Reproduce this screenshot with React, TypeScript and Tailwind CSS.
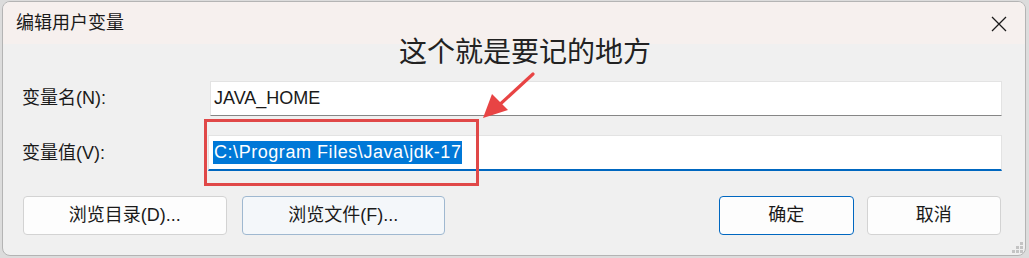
import React from 'react';

const FONT = { fontFamily: '"Liberation Sans", "Noto Sans CJK SC", sans-serif' };

function DialogButton({ label, variant = 'default' }: { label: string; variant?: 'default' | 'hover' | 'primary' }) {
  const look =
    variant === 'primary'
      ? 'border-[#0067c0] bg-[#fdfdfd]'
      : variant === 'hover'
        ? 'border-[#9fb8d0] bg-[#f4f7fa]'
        : 'border-[#d3d3d3] bg-[#fdfdfd]';
  return (
    <div className={`flex h-[39px] items-center justify-center rounded-[4px] border text-[18px] text-[#1a1a1a] ${look}`}>
      {label}
    </div>
  );
}

export default function App() {
  return (
    <div className="relative h-[258px] w-[1029px] overflow-hidden bg-[#dcdcdc] pb-[2px] pl-[2px] pr-[3px] pt-[1px]" style={FONT}>
      {/* dialog window */}
      <div className="flex h-full flex-col overflow-hidden rounded-[8px] border border-[#b4b4b4] bg-[#f0f0f0]">
        {/* title bar */}
        <div className="flex h-[42px] shrink-0 items-start justify-between bg-[#f6f0ee] pl-[13px] pr-[18px] pt-[10px]">
          <span className="text-[18px] leading-[22px] text-[#1a1a1a]">编辑用户变量</span>
          <svg width="16" height="16" viewBox="0 0 16 16" className="mt-[4px]">
            <path d="M1 1 L15 15 M15 1 L1 15" stroke="#1a1a1a" strokeWidth="1.3" fill="none" />
          </svg>
        </div>

        {/* fields */}
        <div className="flex flex-col gap-[19px] pl-[19px] pr-[23px] pt-[37px]">
          <div className="flex items-center">
            <span className="w-[188px] text-[18px] text-[#1a1a1a]">变量名(N):</span>
            <div className="flex h-[35px] flex-1 items-center border border-[#e3e3e3] border-b-[#868686] bg-white pl-[3px] text-[18px] text-[#1a1a1a]">
              JAVA_HOME
            </div>
          </div>
          <div className="flex items-center">
            <span className="w-[186px] text-[18px] text-[#1a1a1a]">变量值(V):</span>
            <div className="flex h-[36px] flex-1 items-center border border-[#e3e3e3] border-b-2 border-b-[#0067c0] bg-white pl-[4px]">
              <span className="bg-[#0078d7] px-[1px] text-[18px] leading-[23px] tracking-[0.55px] text-white">C:\Program Files\Java\jdk-17</span>
            </div>
          </div>
        </div>

        {/* buttons */}
        <div className="flex pl-[20px] pr-[24px] pt-[25px]">
          <div className="grid w-[422px] grid-cols-2 gap-[15px]">
            <DialogButton label="浏览目录(D)..." />
            <DialogButton label="浏览文件(F)..." variant="hover" />
          </div>
          <div className="ml-auto grid w-[282px] grid-cols-2 gap-[13px]">
            <DialogButton label="确定" variant="primary" />
            <DialogButton label="取消" />
          </div>
        </div>
      </div>

      {/* resize grip */}
      <svg width="12" height="12" viewBox="0 0 12 12" className="absolute left-[1012px] top-[242px]">
        <g fill="#c4c4c4">
          <rect x="8" y="0" width="3" height="3" />
          <rect x="4" y="4" width="3" height="3" />
          <rect x="8" y="4" width="3" height="3" />
          <rect x="0" y="8" width="3" height="3" />
          <rect x="4" y="8" width="3" height="3" />
          <rect x="8" y="8" width="3" height="3" />
        </g>
      </svg>

      {/* annotation overlay */}
      <div className="absolute left-[399px] top-[31px] text-[28px] leading-[38px] text-[#222]" style={{ fontFamily: '"Noto Sans CJK SC", sans-serif' }}>
        这个就是要记的地方
      </div>
      <div className="absolute left-[204px] top-[119px] h-[67px] w-[275px] border-[3px] border-[#e04848]" />
      <svg width="70" height="60" viewBox="0 0 70 60" className="absolute left-[478px] top-[70px]">
        <line x1="55" y1="4" x2="18" y2="38" stroke="#e84444" strokeWidth="3.2" strokeLinecap="round" />
        <polygon points="5,48 14,24 30,40" fill="#e84444" />
      </svg>
    </div>
  );
}
